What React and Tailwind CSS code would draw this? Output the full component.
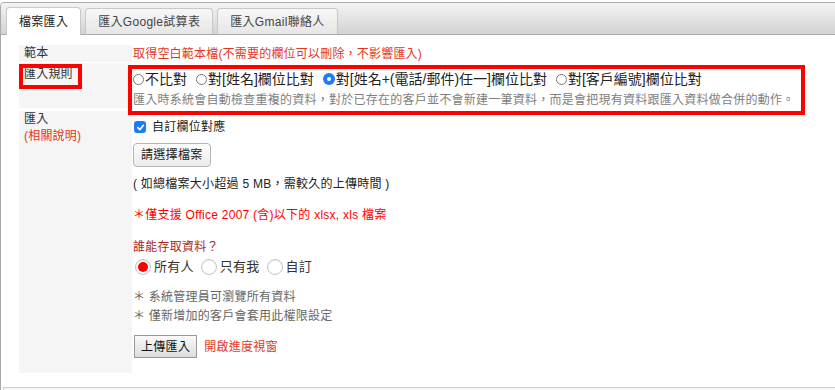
import React from "react";

const font = "font-['Liberation_Sans','Noto_Sans_CJK_TC',sans-serif]";

const SmallRadio = ({ checked }) => (
    <span
        className={
            checked
                ? "inline-flex items-center justify-center w-[12px] h-[12px] rounded-full bg-[#1f7cf5] mr-[1px]"
                : "inline-block w-[11px] h-[11px] rounded-full border border-[#7a7a7a] bg-white mr-[1px]"
        }
    >
        {checked && <span className="w-[4px] h-[4px] rounded-full bg-white" />}
    </span>
);

const BigRadio = ({ checked }) => (
    <span className="inline-flex items-center justify-center w-[16px] h-[16px] rounded-full border border-[#c4c4c4] bg-white mr-[3px] shadow-[inset_0_1px_1px_rgba(0,0,0,0.08)]">
        {checked && <span className="w-[10px] h-[10px] rounded-full bg-[#ff0000]" />}
    </span>
);

const rules = [
    { label: "不比對", checked: false },
    { label: "對[姓名]欄位比對", checked: false },
    { label: "對[姓名+(電話/郵件)任一]欄位比對", checked: true },
    { label: "對[客戶編號]欄位比對", checked: false },
];

const access = [
    { label: "所有人", checked: true },
    { label: "只有我", checked: false },
    { label: "自訂", checked: false },
];

export default function App() {
    return (
        <div className={`w-[835px] h-[390px] bg-white overflow-hidden ${font} text-[#333]`}>
            <div className="mt-[2px] w-[845px] h-[400px] border border-[#aaa] rounded-tl-[4px] bg-white">
                {/* tab bar */}
                <div className="h-[32px] flex items-end gap-[4px] pl-[5px] border-b border-[#aaa] bg-gradient-to-b from-[#f3f3f3] to-[#d3d3d3] rounded-tl-[4px]">
                    <div className="h-[28px] -mb-px px-[12px] flex items-center bg-white border border-b-0 border-[#c8c8c8] rounded-t-[4px] text-[12px] tracking-[0.3px] text-[#222]">
                        檔案匯入
                    </div>
                    <div className="h-[26px] px-[12px] flex items-center bg-gradient-to-b from-[#f7f7f7] to-[#e6e6e6] border border-b-0 border-[#c8c8c8] rounded-t-[4px] text-[12px] tracking-[0.3px] text-[#444]">
                        匯入Google試算表
                    </div>
                    <div className="h-[26px] px-[12px] flex items-center bg-gradient-to-b from-[#f7f7f7] to-[#e6e6e6] border border-b-0 border-[#c8c8c8] rounded-t-[4px] text-[12px] tracking-[0.3px] text-[#444]">
                        匯入Gmail聯絡人
                    </div>
                </div>

                {/* form table */}
                <div className="pt-[10px] pl-[18px]">
                    {/* 範本 */}
                    <div className="flex h-[17px]">
                        <div className="w-[113px] bg-[#f5f5f5] pl-[5px] text-[12px] leading-[17px] tracking-[0.2px]">範本</div>
                        <div className="pl-[1px] text-[12px] leading-[19px] tracking-[0.2px] text-[#e2371d]">
                            取得空白範本檔(不需要的欄位可以刪除，不影響匯入)
                        </div>
                    </div>

                    {/* 匯入規則 */}
                    <div className="flex mt-[1px]">
                        <div className="relative w-[113px] bg-[#f5f5f5] pl-[5px] pt-[4px] text-[12px] leading-[15px] tracking-[0.2px]">
                            匯入規則
                            <div className="absolute left-0 top-[1px] w-[63px] h-[25px] border-4 border-[#ff0000]" />
                        </div>
                        <div className="relative pl-[1px] pt-[6px]">
                            <div className="flex items-center gap-[9px] h-[20px] text-[14px] text-[#222]">
                                {rules.map((r) => (
                                    <span key={r.label} className="flex items-center">
                                        <SmallRadio checked={r.checked} />
                                        {r.label}
                                    </span>
                                ))}
                            </div>
                            <div className="mt-[3px] text-[12px] leading-[16px] tracking-[0.25px] text-[#808080]">
                                匯入時系統會自動檢查重複的資料，對於已存在的客戶並不會新建一筆資料，而是會把現有資料跟匯入資料做合併的動作。
                            </div>
                            <div className="absolute -left-[4px] top-[2px] w-[677px] h-[50px] border-4 border-[#ff0000]" />
                        </div>
                    </div>

                    {/* 匯入 */}
                    <div className="flex mt-[3px]">
                        <div className="w-[113px] bg-[#f5f5f5] pl-[5px] text-[12px] leading-[17px] tracking-[0.2px]">
                            <div>匯入</div>
                            <div className="text-[#e2371d]">(相關說明)</div>
                        </div>
                        <div className="pl-[1px] pt-[7px] pb-[15px] text-[12px] tracking-[0.25px]">
                            <label className="flex items-center h-[18px]">
                                <span className="w-[12px] h-[12px] ml-[1px] mr-[6px] rounded-[3px] bg-[#1f7cf5] flex items-center justify-center">
                                    <svg width="9" height="9" viewBox="0 0 10 10">
                                        <path d="M2 5.2 L4.2 7.4 L8.2 2.6" fill="none" stroke="white" strokeWidth="1.8" strokeLinecap="round" strokeLinejoin="round" />
                                    </svg>
                                </span>
                                <span className="text-[#222]">自訂欄位對應</span>
                            </label>
                            <button className="mt-[7px] h-[24px] px-[7px] rounded-[4px] border border-[#b5b5b5] bg-gradient-to-b from-[#fdfdfd] to-[#ececec] text-[12px] text-[#222] tracking-[0.3px]">
                                請選擇檔案
                            </button>
                            <div className="mt-[8px] leading-[18px] text-[#222]">( 如總檔案大小超過 5 MB，需較久的上傳時間 )</div>
                            <div className="mt-[13px] leading-[18px] text-[#ff0000]">＊僅支援 Office 2007 (含)以下的 xlsx, xls 檔案</div>
                            <div className="mt-[14px] leading-[18px] text-[#a8291c]">誰能存取資料？</div>
                            <div className="mt-[1px] flex items-center gap-[7px] h-[19px] pl-[2px] text-[13px] text-[#333]">
                                {access.map((a) => (
                                    <span key={a.label} className="flex items-center">
                                        <BigRadio checked={a.checked} />
                                        {a.label}
                                    </span>
                                ))}
                            </div>
                            <div className="mt-[12px] leading-[18px] text-[#666]">＊ 系統管理員可瀏覽所有資料</div>
                            <div className="mt-[1px] leading-[18px] text-[#666]">＊ 僅新增加的客戶會套用此權限設定</div>
                            <div className="mt-[10px] flex items-center gap-[7px]">
                                <button className="h-[23px] px-[6px] ml-[1px] border border-[#999] bg-gradient-to-b from-[#fafafa] to-[#dcdcdc] text-[12px] text-[#111] tracking-[0.3px]">
                                    上傳匯入
                                </button>
                                <span className="text-[#e2371d]">開啟進度視窗</span>
                            </div>
                        </div>
                    </div>
                </div>

                {/* bottom panel */}
                <div className="mt-[14px] ml-[2px] h-[30px] border-t border-l border-[#ccc] bg-[#f7f7f7]" />
            </div>
        </div>
    );
}
